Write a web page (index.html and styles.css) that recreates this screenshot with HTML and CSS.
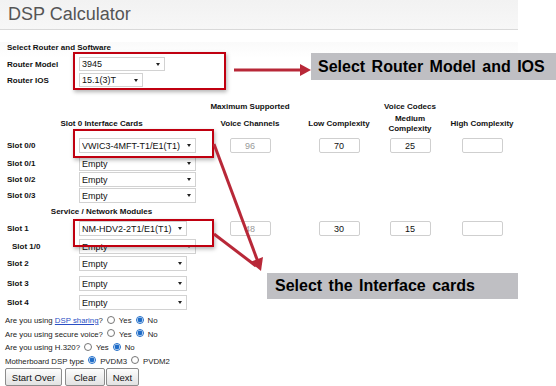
FILE: index.html
```html
<!DOCTYPE html>
<html lang="en">

<head>
    <meta charset="UTF-8">
    <meta name="viewport" content="width=device-width, initial-scale=1.0">
    <title>DSP Calculator</title>
    <link rel="stylesheet" href="styles.css">
</head>

<body>
    <div class="page">
        <header class="header">
            <h1 class="title">DSP Calculator</h1>
        </header>

        <div class="form">
            <div class="section-title">Select Router and Software</div>
            <div class="row router-model">
                <div class="lbl">Router Model</div>
                <span class="select w-model">
                    <select><option>3945</option></select>
                </span>
            </div>
            <div class="row router-ios">
                <div class="lbl">Router IOS</div>
                <span class="select w-ios">
                    <select><option>15.1(3)T</option></select>
                </span>
            </div>

            <div class="row head-1">
                <div class="left-span"></div>
                <div class="c-vc">Maximum Supported</div>
                <div class="c-low"></div>
                <div class="c-med">Voice Codecs</div>
                <div class="c-high"></div>
            </div>
            <div class="row head-2">
                <div class="left-span">Slot 0 Interface Cards</div>
                <div class="c-vc">Voice Channels</div>
                <div class="c-low">Low Complexity</div>
                <div class="c-med">Medium<br>Complexity</div>
                <div class="c-high">High Complexity</div>
            </div>

            <div class="row slot s00">
                <div class="lbl">Slot 0/0</div>
                <div class="c-sel">
                    <span class="select w-long">
                        <select><option>VWIC3-4MFT-T1/E1(T1)</option></select>
                    </span>
                </div>
                <div class="c-vc"><input class="num" type="text" value="96" disabled></div>
                <div class="c-low"><input class="num" type="text" value="70"></div>
                <div class="c-med"><input class="num" type="text" value="25"></div>
                <div class="c-high"><input class="num" type="text" value=""></div>
            </div>
            <div class="row slot s01">
                <div class="lbl">Slot 0/1</div>
                <span class="select w-long"><select><option>Empty</option></select></span>
            </div>
            <div class="row slot s02">
                <div class="lbl">Slot 0/2</div>
                <span class="select w-long"><select><option>Empty</option></select></span>
            </div>
            <div class="row slot s03">
                <div class="lbl">Slot 0/3</div>
                <span class="select w-long"><select><option>Empty</option></select></span>
            </div>

            <div class="row head-3">
                <div class="left-span">Service / Network Modules</div>
            </div>

            <div class="row slot s1">
                <div class="lbl">Slot 1</div>
                <div class="c-sel">
                    <span class="select w-short">
                        <select><option>NM-HDV2-2T1/E1(T1)</option></select>
                    </span>
                </div>
                <div class="c-vc"><input class="num" type="text" value="48" disabled></div>
                <div class="c-low"><input class="num" type="text" value="30"></div>
                <div class="c-med"><input class="num" type="text" value="15"></div>
                <div class="c-high"><input class="num" type="text" value=""></div>
            </div>
            <div class="row slot s10">
                <div class="lbl sub">Slot 1/0</div>
                <span class="select w-long"><select><option>Empty</option></select></span>
            </div>
            <div class="row slot s2">
                <div class="lbl">Slot 2</div>
                <span class="select w-short"><select><option>Empty</option></select></span>
            </div>
            <div class="row slot s3">
                <div class="lbl">Slot 3</div>
                <span class="select w-short"><select><option>Empty</option></select></span>
            </div>
            <div class="row slot s4">
                <div class="lbl">Slot 4</div>
                <span class="select w-short"><select><option>Empty</option></select></span>
            </div>

            <div class="options">
                <div class="opt">Are you using <a href="#">DSP sharing</a>?<input type="radio" name="share">Yes<input type="radio" name="share" checked>No</div>
                <div class="opt">Are you using secure voice?<input type="radio" name="secure">Yes<input type="radio" name="secure" checked>No</div>
                <div class="opt">Are you using H.320?<input type="radio" name="h320">Yes<input type="radio" name="h320" checked>No</div>
                <div class="opt">Motherboard DSP type<input type="radio" name="pvdm" checked>PVDM3<input type="radio" name="pvdm">PVDM2</div>
            </div>

            <div class="buttons">
                <button class="btn b-start">Start Over</button>
                <button class="btn b-clear">Clear</button>
                <button class="btn b-next">Next</button>
            </div>
        </div>

        <!-- annotation overlay -->
        <div class="mark m-router"></div>
        <div class="mark m-slot0"></div>
        <div class="mark m-slot1"></div>

        <div class="callout c-router">Select Router Model and IOS</div>
        <div class="callout c-cards">Select the Interface cards</div>

        <svg class="arrows" width="556" height="386" viewBox="0 0 556 386">
            <line x1="234" y1="70" x2="302" y2="70" stroke="#b82838" stroke-width="3"/>
            <polygon points="300,64 311,70 300,76" fill="#b82838"/>
            <line x1="214" y1="144" x2="258" y2="262" stroke="#b82838" stroke-width="3"/>
            <line x1="214" y1="234" x2="256" y2="266" stroke="#b82838" stroke-width="3"/>
            <polygon points="263,257 261,271 250,262" fill="#b82838"/>
        </svg>
    </div>
</body>

</html>
```

FILE: styles.css
```css
* {
    margin: 0;
    padding: 0;
    box-sizing: border-box;
}

body {
    font-family: "Liberation Sans", Arial, sans-serif;
    background: #fff;
    color: #111;
}

.page {
    position: relative;
    width: 556px;
    height: 386px;
    overflow: hidden;
}

.header {
    width: 518px;
    height: 30px;
    background: linear-gradient(#f2f2f2, #f7f7f7);
    border-bottom: 1px solid #d9d9d9;
}

.title {
    font-size: 18px;
    font-weight: normal;
    color: #555;
    line-height: 28px;
    padding-left: 8px;
}

.form {
    width: 518px;
    background: linear-gradient(#fafafa, #fff 16px) no-repeat;
}

.section-title {
    font-size: 8px;
    font-weight: bold;
    line-height: 11px;
    height: 11px;
    margin-top: 12px;
    padding-left: 7px;
}

.row {
    display: flex;
    align-items: center;
    font-size: 8px;
    font-weight: bold;
}

.lbl {
    width: 79px;
    padding-left: 7px;
    flex-shrink: 0;
}

.lbl.sub {
    padding-left: 12px;
}

.router-model {
    height: 14px;
    margin-top: 4px;
}

.router-ios {
    height: 14px;
    margin-top: 2px;
}

.head-1 {
    height: 12px;
    margin-top: 13px;
    text-align: center;
}

.head-2 {
    height: 20px;
    margin-top: 2px;
    text-align: center;
    line-height: 10px;
}

.head-3 {
    height: 12px;
    margin-top: 2px;
    text-align: center;
}

.left-span {
    width: 205px;
    padding-right: 2px;
    flex-shrink: 0;
}

.c-sel {
    width: 126px;
    flex-shrink: 0;
}

.c-vc {
    width: 90px;
    flex-shrink: 0;
    display: flex;
    justify-content: center;
}

.c-low {
    width: 80px;
    margin-left: 4px;
    flex-shrink: 0;
    display: flex;
    justify-content: center;
}

.c-med {
    width: 56px;
    margin-left: 3px;
    flex-shrink: 0;
    display: flex;
    justify-content: center;
}

.c-high {
    width: 80px;
    margin-left: 4px;
    flex-shrink: 0;
    display: flex;
    justify-content: center;
}

.slot {
    height: 15px;
}

.s00 { margin-top: 4px; }
.s01 { margin-top: 3px; }
.s02 { margin-top: 1px; }
.s03 { margin-top: 1px; }
.s1 { margin-top: 4px; }
.s10 { margin-top: 3px; }
.s2 { margin-top: 2px; }
.s3 { margin-top: 5px; }
.s4 { margin-top: 4px; }

/* selects */
.select {
    position: relative;
    display: inline-block;
    height: 15px;
}

.select select {
    appearance: none;
    -webkit-appearance: none;
    width: 100%;
    height: 100%;
    font-family: "Liberation Sans", Arial, sans-serif;
    font-size: 9px;
    color: #111;
    background: #fff;
    border: 1px solid #d2d2d2;
    border-radius: 0;
    padding: 0 12px 0 2px;
    outline: none;
}

.select::after {
    content: "";
    position: absolute;
    right: 5px;
    top: 6px;
    border-left: 2.5px solid transparent;
    border-right: 2.5px solid transparent;
    border-top: 3px solid #222;
}

.w-model { width: 86px; height: 14px; }
.w-ios { width: 64px; height: 14px; }
.w-long { width: 117px; }
.w-short { width: 108px; }

.num {
    width: 41px;
    height: 15px;
    border: 1px solid #cfcfcf;
    border-radius: 2px;
    background: #fff;
    font-family: "Liberation Sans", Arial, sans-serif;
    font-size: 9px;
    color: #111;
    text-align: center;
    outline: none;
}

.num:disabled {
    color: #999;
    background: #fff;
}

/* radio questions */
.options {
    margin-top: 4px;
    padding-left: 5px;
}

.opt {
    height: 13.5px;
    line-height: 13.5px;
    font-size: 7.8px;
    color: #222;
    white-space: nowrap;
}

.opt a {
    color: #2a4fc4;
}

.opt input {
    width: 8px;
    height: 8px;
    margin: 0 4px 0 4px;
    vertical-align: middle;
    position: relative;
    top: -1px;
    accent-color: #1e6cc8;
}

.buttons {
    padding-left: 5px;
    display: flex;
}

.btn {
    height: 18px;
    font-family: "Liberation Sans", Arial, sans-serif;
    font-size: 9.5px;
    color: #111;
    background: linear-gradient(#fdfdfd, #e2e2e2);
    border: 1px solid #8c8c8c;
    border-radius: 2px;
}

.b-start { width: 57px; }
.b-clear { width: 40px; margin-left: 3px; }
.b-next { width: 33px; margin-left: 1px; }

/* annotation overlay */
.mark {
    position: absolute;
    border: 2px solid #c00010;
    box-shadow: 1px 2px 4px rgba(0, 0, 0, 0.3);
}

.m-router { left: 73px; top: 52px; width: 153px; height: 38px; }
.m-slot0 { left: 73px; top: 129px; width: 141px; height: 29px; }
.m-slot1 { left: 73px; top: 219px; width: 141px; height: 28px; }

.callout {
    position: absolute;
    background: #bfbfc3;
    color: #000;
    font-size: 16px;
    font-weight: bold;
    word-spacing: 2px;
    line-height: 27px;
    white-space: nowrap;
}

.c-router { left: 311px; top: 53px; width: 245px; height: 27px; padding-left: 7px; }
.c-cards { left: 267px; top: 273px; width: 251px; height: 26px; padding-left: 8px; line-height: 26px; }

.arrows {
    position: absolute;
    left: 0;
    top: 0;
    pointer-events: none;
}
```
